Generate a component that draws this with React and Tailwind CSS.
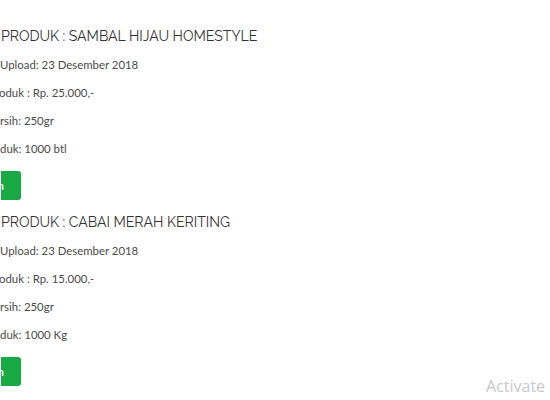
import React from 'react';

const products = [
  { name: 'SAMBAL HIJAU HOMESTYLE', harga: '25.000,-', berat: '250gr', stok: '1000 btl' },
  { name: 'CABAI MERAH KERITING', harga: '15.000,-', berat: '250gr', stok: '1000 Kg' },
];

const ProductBlock = ({ p }) => (
  <div className="flex flex-col">
    <h3 className="h-[30px] leading-[30px] text-[14.05px] text-[#333] font-['Raleway','Lato','Open_Sans',sans-serif]">
      PRODUK : {p.name}
    </h3>
    <div className="flex flex-col text-[11.4px] text-[#4a4a4a] font-['Lato','Noto_Sans',sans-serif]">
      <p className="h-[28px] leading-[28px] -ml-[1px]">Upload: 23 Desember 2018</p>
      <p className="h-[28px] leading-[28px] -ml-[2px]">oduk : Rp. {p.harga}</p>
      <p className="h-[28px] leading-[28px] -ml-[1px]">rsih: {p.berat}</p>
      <p className="h-[28px] leading-[28px] -ml-[1px]">duk: {p.stok}</p>
    </div>
    <div className="overflow-hidden w-[20px] mt-[8px]">
      <button className="-ml-[45px] w-[65px] h-[29px] rounded-[3px] bg-[#18a844] text-white text-[12px] font-semibold text-right pr-[17px] font-['Lato',sans-serif]">
        Pesan
      </button>
    </div>
  </div>
);

export default function App() {
  return (
    <div className="relative w-[550px] h-[400px] bg-white overflow-hidden">
      <div className="flex flex-col gap-[7px] pt-[21px] pl-[1px]">
        {products.map((p) => (
          <ProductBlock key={p.name} p={p} />
        ))}
      </div>
      <div className="absolute left-[486px] top-[374px] text-[16px] text-[#c8c8c8] font-['Open_Sans',sans-serif]">
        Activate
      </div>
    </div>
  );
}
